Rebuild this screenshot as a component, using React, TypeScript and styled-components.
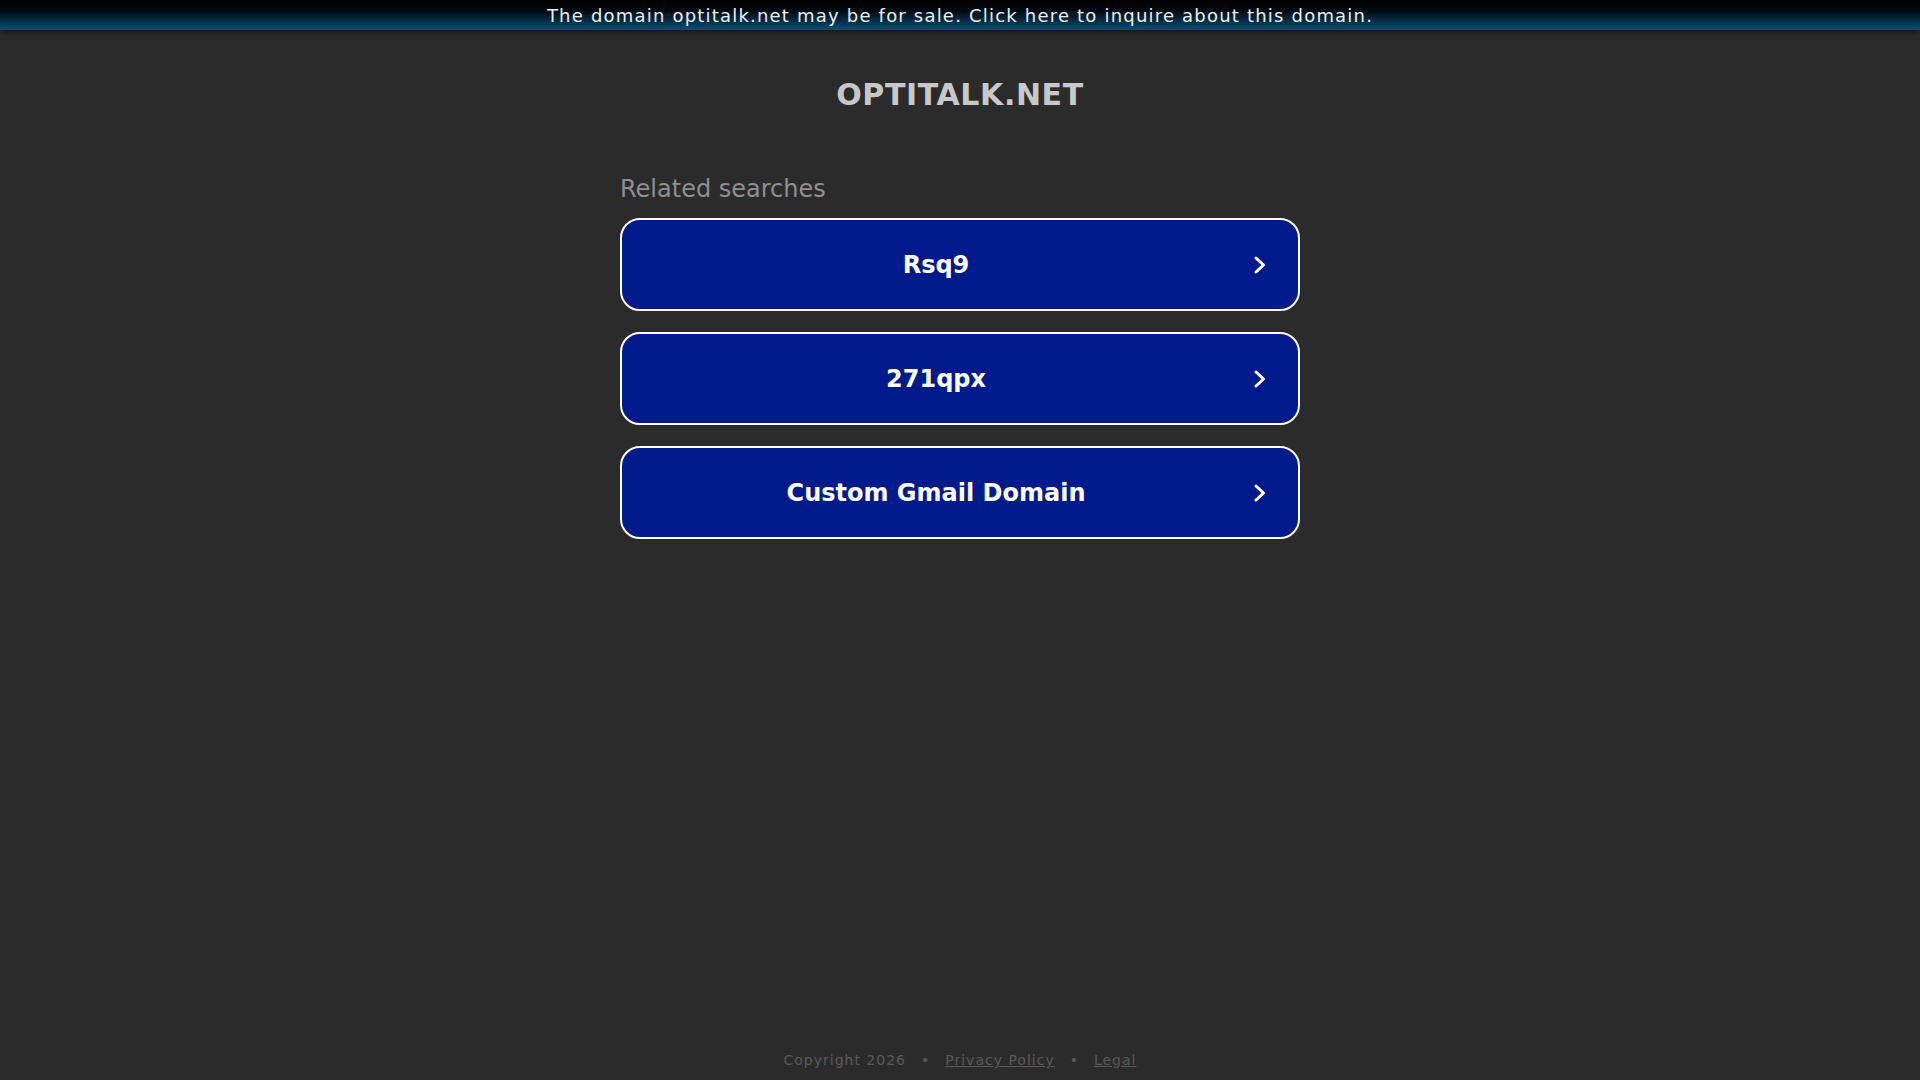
import React from 'react';
import styled, { createGlobalStyle } from 'styled-components';

const GlobalStyle = createGlobalStyle`
    html, body {
        margin: 0;
        padding: 0;
        background: #2b2b2b;
        font-family: "DejaVu Sans", "Liberation Sans", sans-serif;
    }
`;

const Page = styled.div`
    min-height: 100vh;
    display: flex;
    flex-direction: column;
`;

const TopBar = styled.div`
    height: 30px;
    display: flex;
    align-items: center;
    justify-content: center;
    background: linear-gradient(180deg, #000000 0%, #010a12 35%, #0b4d74 100%);
    box-shadow: 0 2px 6px rgba(0, 0, 0, 0.55);
    color: #eeeeee;
    font-size: 18px;
    letter-spacing: 1.2px;
    cursor: pointer;
`;

const Main = styled.main`
    flex: 1;
    display: flex;
    flex-direction: column;
    align-items: center;
`;

const Title = styled.h1`
    margin: 47px 0 0 0;
    font-size: 30px;
    line-height: 36px;
    letter-spacing: 0.6px;
    font-weight: bold;
    color: #c8c8c8;
`;

const Searches = styled.section`
    width: 680px;
    margin-top: 61px;
`;

const Heading = styled.div`
    font-size: 24px;
    line-height: 30px;
    color: #8f8f8f;
`;

const List = styled.div`
    margin-top: 14px;
    display: flex;
    flex-direction: column;
    gap: 21px;
`;

const SearchButton = styled.a`
    box-sizing: border-box;
    height: 93px;
    display: flex;
    align-items: center;
    padding: 0 14px;
    border: 2px solid #ffffff;
    border-radius: 20px;
    background: #011a8c;
    color: #ffffff;
    text-decoration: none;
    cursor: pointer;
`;

const SearchText = styled.span`
    flex: 1;
    text-align: center;
    font-size: 24px;
    font-weight: bold;
`;

const Arrow = styled.span`
    width: 48px;
    display: flex;
    justify-content: center;
    align-items: center;
`;

const Footer = styled.footer`
    display: flex;
    justify-content: center;
    align-items: center;
    padding-bottom: 10px;
    font-size: 14px;
    line-height: 20px;
    letter-spacing: 1px;
    color: #5a5a5a;
`;

const FooterLink = styled.a`
    color: #5a5a5a;
    text-decoration: underline;
`;

const Dot = styled.span`
    margin: 0 15px;
`;

const searches = ['Rsq9', '271qpx', 'Custom Gmail Domain'];

const Chevron = () => (
    <svg width="16" height="20" viewBox="0 0 16 20">
        <polyline points="4,3 11.5,10 4,17" fill="none" stroke="#ffffff" strokeWidth="3" strokeLinecap="round" strokeLinejoin="round" />
    </svg>
);

const App: React.FC = () => {
    return (
        <Page>
            <GlobalStyle />
            <TopBar>The domain optitalk.net may be for sale. Click here to inquire about this domain.</TopBar>
            <Main>
                <Title>OPTITALK.NET</Title>
                <Searches>
                    <Heading>Related searches</Heading>
                    <List>
                        {searches.map((s) => (
                            <SearchButton key={s}>
                                <SearchText>{s}</SearchText>
                                <Arrow><Chevron /></Arrow>
                            </SearchButton>
                        ))}
                    </List>
                </Searches>
            </Main>
            <Footer>
                <span>Copyright 2026</span>
                <Dot>•</Dot>
                <FooterLink>Privacy Policy</FooterLink>
                <Dot>•</Dot>
                <FooterLink>Legal</FooterLink>
            </Footer>
        </Page>
    );
};

export default App;
